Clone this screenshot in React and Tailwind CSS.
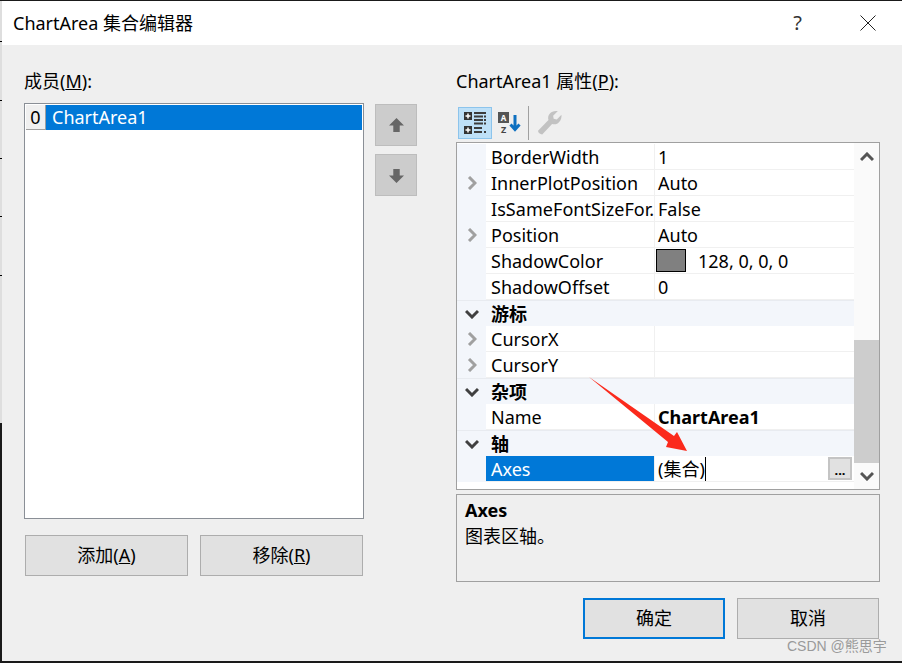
import React from "react";

const font = { fontFamily: '"Noto Sans", "Noto Sans CJK SC", sans-serif' };

const rows = [
  { name: "BorderWidth", value: "1" },
  { name: "InnerPlotPosition", value: "Auto", more: true },
  { name: "IsSameFontSizeFor.", value: "False", clip: true },
  { name: "Position", value: "Auto", more: true },
  { name: "ShadowColor", value: "128, 0, 0, 0", swatch: true },
  { name: "ShadowOffset", value: "0" },
  { group: "游标" },
  { name: "CursorX", value: "", more: true },
  { name: "CursorY", value: "", more: true },
  { group: "杂项" },
  { name: "Name", value: "ChartArea1", bold: true },
  { group: "轴" },
  { name: "Axes", value: "(集合)", selected: true },
];

const Chevron = ({ dir, color = "#a0a0a0" }) => {
  const d = {
    right: "M2 1 L8 7 L2 13",
    down: "M1 2 L7 8 L13 2",
    up: "M1 8 L7 2 L13 8",
  }[dir];
  const box = dir === "right" ? "0 0 10 14" : "0 0 14 10";
  return (
    <svg
      viewBox={box}
      className={dir === "right" ? "w-[10px] h-[14px]" : "w-[14px] h-[10px]"}
    >
      <path d={d} fill="none" stroke={color} strokeWidth="3" />
    </svg>
  );
};

const PropRow = ({ row }) => {
  if (row.group) {
    return (
      <div className="flex h-[26px] bg-[#f3f6fb] border-t border-[#e8ebf0]">
        <div className="w-[29px] flex items-center justify-center">
          <Chevron dir="down" color="#404040" />
        </div>
        <span className="pl-[5px] font-bold text-[18px] leading-[26px] text-black">
          {row.group}
        </span>
      </div>
    );
  }
  return (
    <div className="flex h-[26px]">
      <div className="w-[29px] shrink-0 bg-[#f3f6fb] flex items-center justify-center">
        {row.more && <Chevron dir="right" />}
      </div>
      <div
        className={`w-[168px] shrink-0 pl-[5px] pt-[1px] overflow-hidden whitespace-nowrap text-[18px] leading-[24px] border-b border-[#f0f0f0] ${
          row.selected ? "bg-[#0078d7] text-white" : "text-black"
        } ${row.clip ? "tracking-[0.05px]" : ""}`}
      >
        {row.name}
      </div>
      <div className="flex-1 flex items-center pl-[3px] pt-[2px] border-l border-[#f0f0f0] border-b text-[18px] whitespace-nowrap text-black relative">
        {row.swatch && (
          <span className="w-[30px] h-[23px] -ml-[2px] -mt-[2px] bg-[#808080] border border-black mr-[12px] shrink-0" />
        )}
        <span className={row.bold ? "font-bold" : ""}>{row.value}</span>
        {row.selected && (
          <>
            <span className="w-[1px] h-[24px] -mt-[2px] bg-black" />
            <span className="absolute right-[2px] top-[1px] w-[24px] h-[23px] bg-[#e1e1e1] border-2 border-[#c4c4c4] flex items-end justify-center text-[13px] font-bold leading-[15px]">
              ...
            </span>
          </>
        )}
      </div>
    </div>
  );
};

const Btn = ({ children, focus, className = "" }) => (
  <div
    className={`h-[41px] flex items-center justify-center bg-[#e1e1e1] text-[18px] text-black ${
      focus ? "border-2 border-[#0078d7]" : "border border-[#adadad]"
    } ${className}`}
  >
    {children}
  </div>
);

export default function App() {
  return (
    <div
      style={font}
      className="relative w-[902px] h-[663px] overflow-hidden flex flex-col bg-[#efefef] border-t border-b-2 border-[#1a1a1a]"
    >
      {/* title bar */}
      <div className="h-[44px] shrink-0 bg-white flex items-center pl-[13px] text-[18px] text-black">
        <span>ChartArea 集合编辑器</span>
        <span className="ml-auto text-[20px] text-[#333] mr-[58px]">?</span>
        <svg viewBox="0 0 16 16" className="w-[16px] h-[16px] mr-[26px]">
          <path d="M0.5 0.5 L15.5 15.5 M15.5 0.5 L0.5 15.5" stroke="#222" strokeWidth="1" />
        </svg>
      </div>

      <div className="flex-1 flex pt-[21px]">
        {/* members */}
        <div className="w-[340px] ml-[24px] shrink-0 flex flex-col">
          <div className="h-[30px] text-[18px] leading-[30px] text-black">
            成员(<span className="underline">M</span>):
          </div>
          <div className="mt-[7px] h-[416px] w-[340px] bg-white border border-[#8a8f96] p-[1px]">
            <div className="flex h-[25px]">
              <div className="w-[20px] h-[25px] bg-[#f0f0f0] border-r border-b border-[#a0a0a0] flex items-center justify-center text-[18px] text-black">
                0
              </div>
              <div className="flex-1 bg-[#0078d7] text-white text-[18px] leading-[25px] pl-[6px]">
                ChartArea1
              </div>
            </div>
          </div>
          <div className="mt-[16px] flex gap-[12px] pl-[1px]">
            <Btn className="w-[163px]">
              添加(<span className="underline">A</span>)
            </Btn>
            <Btn className="w-[163px]">
              移除(<span className="underline">R</span>)
            </Btn>
          </div>
        </div>

        {/* move buttons */}
        <div className="ml-[11px] w-[42px] pt-[38px] flex flex-col gap-[8px] shrink-0">
          <div className="h-[42px] bg-[#cccccc] border border-[#bdbdbd] flex items-center justify-center">
            <svg viewBox="0 0 14 14" className="w-[15px] h-[15px]">
              <path d="M7 0 L14 7 L10 7 L10 13 L4 13 L4 7 L0 7 Z" fill="#666" />
            </svg>
          </div>
          <div className="h-[42px] bg-[#cccccc] border border-[#bdbdbd] flex items-center justify-center">
            <svg viewBox="0 0 14 14" className="w-[15px] h-[15px]">
              <path d="M7 14 L14 7 L10 7 L10 1 L4 1 L4 7 L0 7 Z" fill="#666" />
            </svg>
          </div>
        </div>

        {/* properties */}
        <div className="ml-[39px] w-[424px] shrink-0 flex flex-col">
          <div className="h-[30px] text-[18px] leading-[30px] text-black">
            ChartArea1 属性(<span className="underline">P</span>):
          </div>
          <div className="mt-[10px] h-[33px] flex items-center pl-[2px]">
            <div className="w-[34px] h-[32px] bg-[#bee0f7] border border-[#8cc4ec] flex items-center justify-center">
              <svg viewBox="0 0 22 22" className="w-[22px] h-[22px]">
                <rect x="0" y="0" width="8" height="8" fill="#333" />
                <path d="M1.500 4h5M4 1.500v5" stroke="#fff" strokeWidth="1.500" />
                <rect x="0" y="14" width="8" height="8" fill="#333" />
                <path d="M1.500 18h5M4 15.500v5" stroke="#fff" strokeWidth="1.500" />
                <path d="M10 1h12M10 4.500h9M20 4.500h2M10 8h9M20 8h2M10 11.500h9M20 11.500h2M10 16h8M10 20h8M20 20h2" stroke="#3c3c3c" strokeWidth="2" />
              </svg>
            </div>
            <div className="w-[34px] h-[32px] flex items-center justify-center">
              <svg viewBox="0 0 22 22" className="w-[22px] h-[22px] overflow-visible">
                <rect x="0" y="0" width="11" height="11" fill="#555" />
                <text x="5.500" y="8.500" fontSize="8" fontWeight="700" fill="#fff" textAnchor="middle">A</text>
                <text x="5.500" y="21" fontSize="9" fontWeight="700" fill="#444" textAnchor="middle">Z</text>
                <path d="M17 3v14M12.500 12.500l4.500 5 4.500-5" fill="none" stroke="#0e70c0" strokeWidth="3" />
              </svg>
            </div>
            <div className="w-[1px] h-[34px] bg-[#a0a0a0] ml-[2px]" />
            <div className="w-[34px] h-[32px] ml-[3px] flex items-center justify-center">
              <svg viewBox="0 0 24 24" className="w-[25px] h-[25px]">
                <path d="M1 20 L11 9.500 C9.500 4.500 14 0 20 1 L15.500 5.500 L16 8.500 L19 9 L23.500 4.500 C24 10.500 19.500 15 14.500 13.500 L5 23.500 C3 23.500 1 22 1 20 Z" fill="#c2c2c2" />
              </svg>
            </div>
          </div>

          {/* grid */}
          <div className="mt-[3px] h-[348px] border border-[#a0a0a0] bg-white flex relative overflow-hidden">
            <div className="w-[397px] shrink-0 flex flex-col pt-[1px]">
              {rows.map((r, i) => (
                <PropRow key={i} row={r} />
              ))}
              <div className="flex-1 bg-white" />
            </div>
            <div className="flex-1 flex flex-col bg-[#fafafa]">
              <div className="h-[28px] flex items-center justify-center">
                <Chevron dir="up" color="#555" />
              </div>
              <div className="flex-1 flex flex-col justify-end">
                <div className="h-[123px] bg-[#cdcdcd]" />
              </div>
              <div className="h-[26px] flex items-center justify-center">
                <Chevron dir="down" color="#555" />
              </div>
            </div>
          </div>

          {/* description */}
          <div className="mt-[4px] h-[88px] border border-[#a0a0a0] px-[8px] pt-[2px] text-[18px] text-black">
            <div className="font-bold leading-[26px]">Axes</div>
            <div className="leading-[26px]">图表区轴。</div>
          </div>

          <div className="mt-[16px] flex justify-end gap-[12px] pr-[1px]">
            <Btn focus className="w-[142px]">确定</Btn>
            <Btn className="w-[142px]">取消</Btn>
          </div>
        </div>
      </div>

      {/* red annotation arrow */}
      <svg className="absolute left-0 top-[-1px] w-[902px] h-[663px] pointer-events-none" viewBox="0 0 902 663">
        <polygon points="589,377 674,436 677,432 687,451 666,447 668,442" fill="#fb2a1c" />
      </svg>

      {/* slivers of the windows behind the dialog, along the left edge */}
      <div className="absolute left-0 top-0 w-[2px] h-[422px] bg-[#dedede]" />
      <div className="absolute left-0 top-[422px] bottom-0 w-[2px] bg-[#1a1a1a]" />
      <div className="absolute left-0 top-[40px] w-[2px] h-[1px] bg-black" />
      <div className="absolute left-0 top-[99px] w-[2px] h-[1px] bg-black" />
      <div className="absolute left-0 top-[157px] w-[2px] h-[1px] bg-black" />
      <div className="absolute left-0 top-[215px] w-[2px] h-[1px] bg-black" />
      <div className="absolute left-0 top-[274px] w-[2px] h-[1px] bg-black" />

      {/* watermark */}
      <span
        style={{ fontFamily: '"Liberation Sans", "Noto Sans CJK SC", sans-serif' }}
        className="absolute left-[787px] top-[636px] text-[14px] leading-[18px] text-[#9a9a9a]"
      >
        CSDN @熊思宇
      </span>
    </div>
  );
}
